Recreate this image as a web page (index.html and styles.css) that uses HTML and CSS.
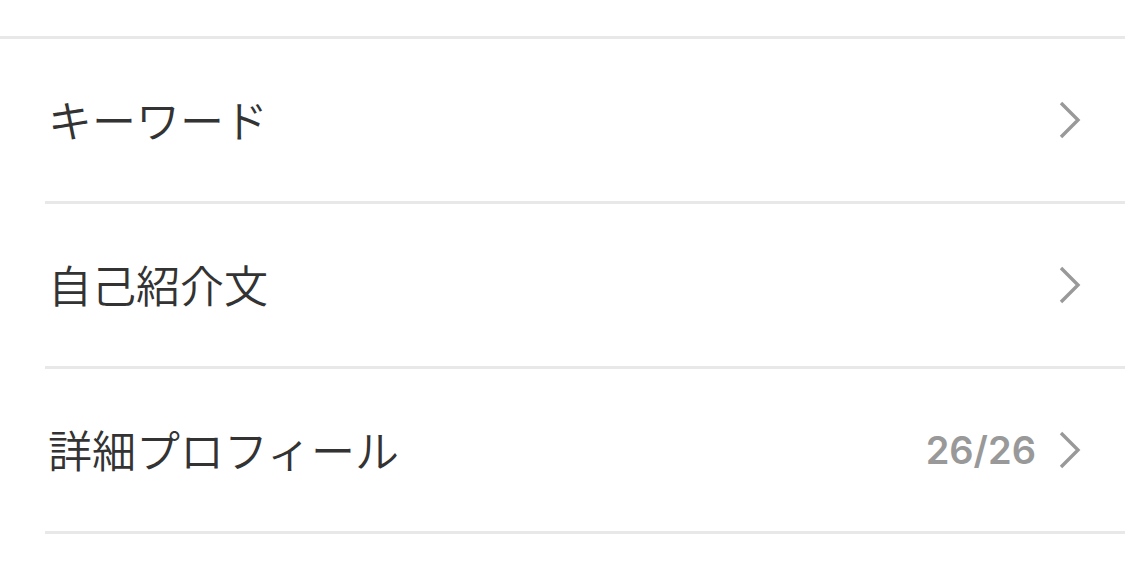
FILE: index.html
```html
<!DOCTYPE html>
<html lang="ja">
<head>
<meta charset="utf-8">
<link rel="stylesheet" href="styles.css">
</head>
<body>
<div class="top"></div>
<ul class="list">
  <li class="row">
    <span class="label">キーワード</span>
    <span class="right">
      <svg class="chev" width="22" height="38" viewBox="0 0 22 38"><path d="M2 2 L19 19 L2 36" fill="none" stroke="#999" stroke-width="3.4"/></svg>
    </span>
  </li>
  <li class="row">
    <span class="label">自己紹介文</span>
    <span class="right">
      <svg class="chev" width="22" height="38" viewBox="0 0 22 38"><path d="M2 2 L19 19 L2 36" fill="none" stroke="#999" stroke-width="3.4"/></svg>
    </span>
  </li>
  <li class="row">
    <span class="label">詳細プロフィール</span>
    <span class="right">
      <span class="count">26/26</span>
      <svg class="chev" width="22" height="38" viewBox="0 0 22 38"><path d="M2 2 L19 19 L2 36" fill="none" stroke="#999" stroke-width="3.4"/></svg>
    </span>
  </li>
</ul>
</body>
</html>
```
FILE: styles.css
```css
html, body {
  margin: 0;
  padding: 0;
  background: #fff;
}
body {
  font-family: "Noto Sans CJK JP", "Noto Sans", sans-serif;
  width: 1125px;
  height: 567px;
  overflow: hidden;
}
.top {
  height: 36px;
  border-bottom: 3px solid #e8e8e8;
}
.list {
  list-style: none;
  margin: 0;
  padding: 0 0 0 45px;
}
.row {
  display: flex;
  align-items: center;
  justify-content: space-between;
  height: 162px;
  border-bottom: 3px solid #e8e8e8;
  padding: 0 44px 0 3px;
}
.label {
  font-size: 44px;
  font-weight: 350;
  color: #333;
  line-height: 1;
  padding-bottom: 3px;
}
.right {
  display: flex;
  align-items: center;
  gap: 23px;
}
.count {
  font-family: Inter, "Liberation Sans", sans-serif;
  font-weight: 600;
  font-size: 38px;
  color: #999;
}
.chev {
  display: block;
}
```
